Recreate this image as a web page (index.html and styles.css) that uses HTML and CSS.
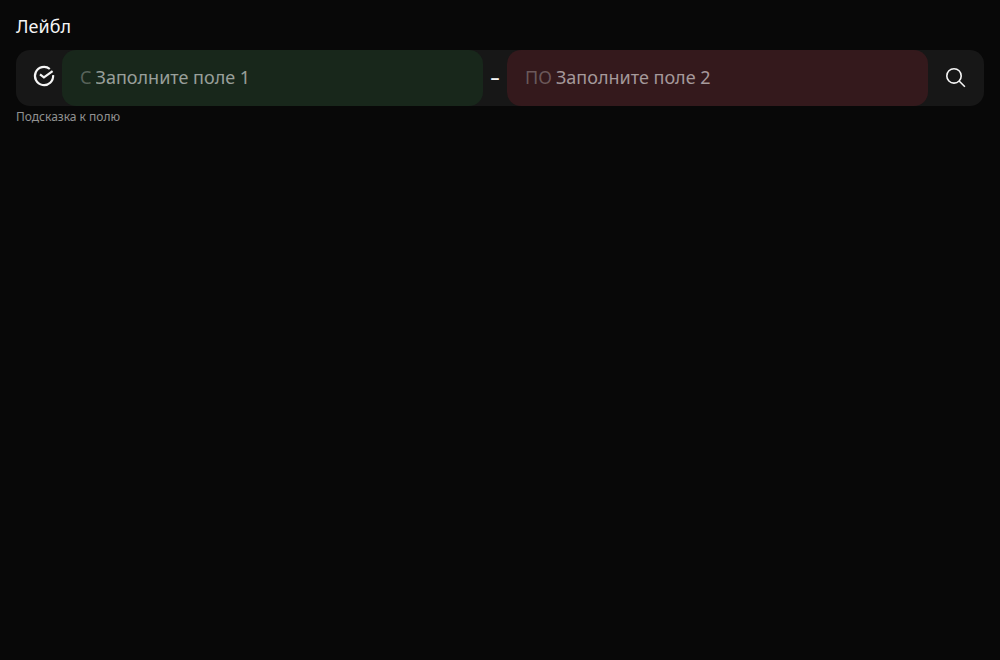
FILE: index.html
```html
<!DOCTYPE html>
<html lang="ru">
<head>
<meta charset="utf-8">
<meta name="viewport" content="width=device-width, initial-scale=1">
<title>Range</title>
<link rel="stylesheet" href="styles.css">
</head>
<body>
<div class="range" role="group" aria-labelledby="range-label" aria-describedby="range-hint">
  <div class="range-label" id="range-label">Лейбл</div>
  <div class="range-bar">
    <svg class="icon icon-before" viewBox="0 0 24 24" aria-hidden="true">
      <path d="M17.8 5A9.1 9.1 0 1 0 21.1 11.2M8 10.4l3.9 2.9L20.6 7.2" />
    </svg>
    <div class="field field-success">
      <label class="prefix" for="from">С</label>
      <input class="input" id="from" type="text" placeholder="Заполните поле 1">
    </div>
    <span class="divider">–</span>
    <div class="field field-error">
      <label class="prefix" for="to">ПО</label>
      <input class="input" id="to" type="text" placeholder="Заполните поле 2">
    </div>
    <button class="search" type="button" aria-label="Поиск">
      <svg class="icon icon-search" viewBox="0 0 24 24" aria-hidden="true">
        <circle cx="10" cy="9.9" r="7.2" />
        <path d="M15.1 15l5.8 5.8" />
      </svg>
    </button>
  </div>
  <div class="range-hint" id="range-hint">Подсказка к полю</div>
</div>
</body>
</html>
```
FILE: styles.css
```css
* {
  box-sizing: border-box;
}

body {
  margin: 0;
  padding: 16px;
  background: #080808;
  color: #f5f5f5;
  font-family: "Noto Sans", "Open Sans", sans-serif;
  font-size: 18px;
  line-height: 20px;
}

.range {
  display: flex;
  flex-direction: column;
}

.range-label {
  margin-bottom: 14px;
}

.range-bar {
  display: flex;
  align-items: stretch;
  min-height: 56px;
  border-radius: 14px;
  background: #171717;
}

.icon {
  display: block;
  width: 24px;
  height: 24px;
  fill: none;
  stroke: currentColor;
}

.icon-before {
  flex: none;
  margin: 14px 6px 16px 16px;
  stroke-width: 2.2;
}

.icon-search {
  stroke-width: 1.6;
}

.field {
  display: flex;
  flex: 1;
  align-items: center;
  gap: 4px;
  min-width: 0;
  padding: 0 18px 2px;
  border-radius: 14px;
}

.field-success {
  background: #18271b;
}

.field-error {
  background: #34191c;
}

.prefix {
  color: rgba(255, 255, 255, 0.28);
}

.input {
  flex: 1;
  min-width: 0;
  padding: 0;
  border: 0;
  outline: 0;
  background: transparent;
  color: inherit;
  font: inherit;
}

.input::placeholder {
  color: rgba(255, 255, 255, 0.56);
  opacity: 1;
}

.divider {
  display: flex;
  flex: none;
  align-items: center;
  justify-content: center;
  width: 24px;
  padding-bottom: 2px;
  font-weight: 600;
}

.search {
  flex: none;
  padding: 16px;
  border: 0;
  background: transparent;
  color: inherit;
  cursor: pointer;
}

.range-hint {
  margin-top: 4px;
  color: rgba(255, 255, 255, 0.56);
  font-size: 12px;
  line-height: 14px;
}
```
